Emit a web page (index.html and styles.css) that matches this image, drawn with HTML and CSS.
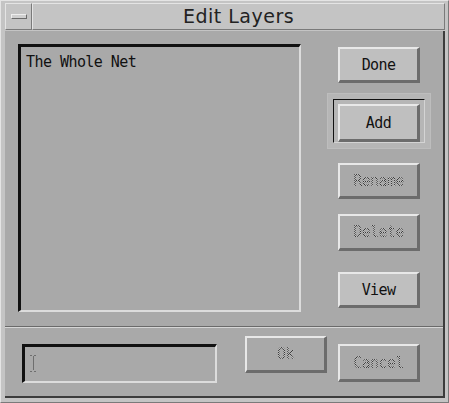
FILE: index.html
```html
<!DOCTYPE html>
<html lang="en">
<head>
    <meta charset="UTF-8">
    <title>Edit Layers</title>
    <link rel="stylesheet" href="styles.css">
</head>
<body>

<div class="window">
    <!-- title bar -->
    <div class="titlebar">
        <div class="menu-btn"><span class="menu-bar"></span></div>
        <div class="title">Edit Layers</div>
    </div>

    <div class="client">
        <div class="main">
            <div class="layer-list">
                <div class="layer-item">The Whole Net</div>
            </div>

            <div class="buttons">
                <button class="btn btn-done">Done</button>
                <div class="default-wrap">
                    <div class="default-inner">
                        <button class="btn">Add</button>
                    </div>
                </div>
                <button class="btn btn-rename disabled">Rename</button>
                <button class="btn btn-delete disabled">Delete</button>
                <button class="btn btn-view">View</button>
            </div>
        </div>

        <div class="separator"></div>

        <div class="bottom">
            <div class="name-field">
                <svg class="ibeam" width="7" height="17" viewBox="0 0 7 17">
                    <path d="M0.5 0.5h2M4.5 0.5h2M3.5 1.5v14M0.5 16.5h2M4.5 16.5h2" stroke="#333" stroke-width="1" stroke-dasharray="1 1" fill="none"/>
                </svg>
            </div>
            <button class="btn btn-ok disabled">Ok</button>
            <button class="btn btn-cancel disabled">Cancel</button>
        </div>
    </div>
</div>

</body>
</html>
```

FILE: styles.css
```css
html, body {
    margin: 0;
    padding: 0;
}
body {
    width: 449px;
    height: 403px;
    overflow: hidden;
    background-color: #c4c4c4;
}
.window {
    box-sizing: border-box;
    width: 449px;
    height: 403px;
    padding: 2px 3px 4px 4px;
    background-color: #c4c4c4;
    border-left: 1px solid #e4e4e4;
    border-top: 1px solid #e4e4e4;
    border-right: 1px solid #7a7a7a;
    border-bottom: 1px solid #7a7a7a;
    display: flex;
    flex-direction: column;
}

/* title bar */
.titlebar {
    display: flex;
    height: 27px;
    margin-bottom: 1px;
}
.menu-btn {
    box-sizing: border-box;
    width: 27px;
    border-left: 1px solid #e4e4e4;
    border-top: 1px solid #e4e4e4;
    border-right: 1px solid #7a7a7a;
    border-bottom: 1px solid #7a7a7a;
    display: flex;
    align-items: center;
    justify-content: center;
}
.menu-bar {
    box-sizing: border-box;
    width: 16px;
    height: 5px;
    background-color: #cfcfcf;
    border-top: 1px solid #eeeeee;
    border-left: 1px solid #eeeeee;
    border-right: 1px solid #6a6a6a;
    border-bottom: 1px solid #6a6a6a;
}
.title {
    box-sizing: border-box;
    flex: 1;
    border-left: 1px solid #e4e4e4;
    border-top: 1px solid #e4e4e4;
    border-right: 1px solid #7a7a7a;
    border-bottom: 1px solid #7a7a7a;
    text-align: center;
    font-family: "DejaVu Sans", sans-serif;
    font-size: 19px;
    letter-spacing: 0.5px;
    line-height: 25px;
    color: #222;
}

/* client area */
.client {
    flex: 1;
    background-color: #a9a9a9;
    border-right: 2px solid #3c3c3c;
    border-bottom: 2px solid #3c3c3c;
    display: flex;
    flex-direction: column;
}
.main {
    display: flex;
    padding: 13px 0 0 13px;
}
.layer-list {
    box-sizing: border-box;
    width: 283px;
    height: 268px;
    border-top: 3px solid #111;
    border-left: 3px solid #111;
    border-right: 2px solid #dcdcdc;
    border-bottom: 2px solid #dcdcdc;
    padding: 6px 0 0 5px;
}
.layer-item {
    font-family: "DejaVu Sans Mono", monospace;
    font-size: 15px;
    letter-spacing: -0.55px;
    color: #111;
    line-height: 18px;
}

.buttons {
    width: 104px;
    margin-left: 26px;
    display: flex;
    flex-direction: column;
    align-items: center;
}
.btn {
    box-sizing: border-box;
    width: 82px;
    height: 37px;
    margin: 0;
    padding: 0;
    background-color: #bfbfbf;
    border-top: 2px solid #e8e8e8;
    border-left: 2px solid #e8e8e8;
    border-right: 3px solid #6c6c6c;
    border-bottom: 3px solid #6c6c6c;
    font-family: "DejaVu Sans Mono", monospace;
    font-size: 15px;
    letter-spacing: -0.6px;
    color: #111;
    cursor: pointer;
}
.btn.disabled {
    color: transparent;
    background-image: repeating-conic-gradient(#3a3a3a 0 25%, #bfbfbf 0 50%);
    background-size: 2px 2px;
    -webkit-background-clip: text;
    background-clip: text;
    background-color: #bfbfbf;
}
.btn-done {
    margin-top: 3px;
    height: 36px;
}
.default-wrap {
    box-sizing: border-box;
    width: 104px;
    height: 56px;
    margin-top: 10px;
    padding: 5px;
    background-color: #b6b6b6;
    border: 1px solid #bdbdbd;
}
.default-inner {
    box-sizing: border-box;
    height: 100%;
    border-top: 1px solid #111;
    border-left: 1px solid #111;
    border-right: 1px solid #d4d4d4;
    border-bottom: 1px solid #d4d4d4;
    padding: 4px 0 0 4px;
}
.default-inner .btn {
    height: 38px;
}
.btn-rename {
    margin-top: 14px;
    height: 36px;
}
.btn-delete {
    margin-top: 15px;
}
.btn-view {
    margin-top: 21px;
    height: 36px;
}

.separator {
    margin-top: 14px;
    height: 1px;
    background-color: #6a6a6a;
    border-bottom: 1px solid #d6d6d6;
}

.bottom {
    display: flex;
    align-items: flex-start;
    padding-left: 17px;
}
.name-field {
    box-sizing: border-box;
    width: 195px;
    height: 39px;
    margin-top: 16px;
    border-top: 3px solid #111;
    border-left: 3px solid #111;
    border-right: 2px solid #dcdcdc;
    border-bottom: 2px solid #dcdcdc;
    padding: 8px 0 0 5px;
}
.ibeam {
    display: block;
}
.btn-ok {
    margin-top: 8px;
    margin-left: 28px;
}
.btn-cancel {
    margin-top: 16px;
    margin-left: 11px;
    height: 38px;
}
```
